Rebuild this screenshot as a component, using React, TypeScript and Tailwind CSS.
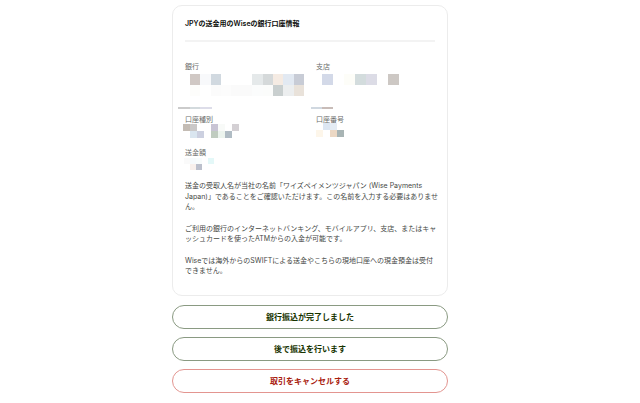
import React from "react";

type Cell = string | null;

function Pix({ rows, size, offset }: { rows: Cell[][]; size: number; offset: number }) {
  return (
    <div className="flex flex-col" style={{ marginLeft: offset }}>
      {rows.map((r, i) => (
        <div key={i} className="flex">
          {r.map((c, j) => (
            <div key={j} style={{ width: size, height: size, background: c ?? "transparent" }} />
          ))}
        </div>
      ))}
    </div>
  );
}

function Bar({ colors, offset }: { colors: [string, number][]; offset: number }) {
  return (
    <div className="flex h-[2px]" style={{ marginLeft: offset }}>
      {colors.map(([c, w], i) => (
        <div key={i} style={{ width: w, background: c }} />
      ))}
    </div>
  );
}

export default function App() {
  return (
    <div
      className="w-[640px] h-[403px] bg-white pl-[172px] pt-[5px]"
      style={{ fontFamily: 'Inter, "Noto Sans CJK JP", sans-serif' }}
    >
      <div className="w-[276px]">
        <div className="border border-[#ececec] rounded-[10px] px-[12px] pt-[13px] pb-[19px] h-[291px]">
          <div className="text-[7px] leading-[10px] font-semibold text-[#0e0f0c] whitespace-nowrap">
            JPYの送金用のWiseの銀行口座情報
          </div>
          <div className="mt-[11px] h-[2px] bg-[#f3f3f3]" />

          <div className="grid grid-cols-[119px_119px] gap-x-[12px] mt-[20px]">
            <div>
              <div className="text-[7px] leading-[10px] text-[#6a6c6a]">銀行</div>
              <div className="mt-[2px]">
                <Pix
                  size={11}
                  offset={5}
                  rows={[
                    ["#d0c8c4", "#f8f9fb", "#d1d9e0", null, null, null, "#e5e9ea", "#d5d9da", "#f5ebe3", "#e2e9f2", "#c8ccd6"],
                    ["#fdfdfb", null, "#fbfbfb", "#fcfcfc", "#fafafa", "#fafafa", "#fbfcfc", "#fbfcfb", "#c9cfcf", "#eceeef", "#e9e2da"],
                  ]}
                />
              </div>
              <div className="mt-[11px]">
                <Bar offset={-7} colors={[["#cbcbcb", 12], ["#d3dadd", 10], ["#dddde9", 12]]} />
              </div>
            </div>
            <div>
              <div className="text-[7px] leading-[10px] text-[#6a6c6a]">支店</div>
              <div className="mt-[2px]">
                <Pix
                  size={11}
                  offset={6}
                  rows={[
                    ["#d3d9e8", null, "#fdfdf8", "#d3dcdd", "#dcdce6", null, "#cdc8c4"],
                    [null, null, null, null, null, null, null],
                  ]}
                />
              </div>
              <div className="mt-[11px]">
                <Bar offset={-5} colors={[["#d0d8e0", 11], ["#c8bcb8", 11]]} />
              </div>
            </div>

            <div className="mt-[6px]">
              <div className="text-[7px] leading-[10px] text-[#6a6c6a]">口座種別</div>
              <div className="-mt-[1px]">
                <Pix
                  size={7}
                  offset={-2}
                  rows={[
                    ["#c4bcb4", "#cac8c8", null, null, "#c8c4d4", "#f8faf8", null, "#d4d0d4"],
                    [null, "#dae6f0", "#ccd0e0", null, "#c0ccc0", "#ecf4ee", "#b0bcc4", null],
                  ]}
                />
              </div>
            </div>
            <div className="mt-[6px]">
              <div className="text-[7px] leading-[10px] text-[#6a6c6a]">口座番号</div>
              <div className="-mt-[2px]">
                <Pix
                  size={7}
                  offset={0}
                  rows={[
                    [null, "#dce6f2", "#e4ecf4", null],
                    ["#fdf6ea", null, "#ecd8c4", "#a8b4b4"],
                  ]}
                />
              </div>
            </div>

            <div className="mt-[10px] col-span-2">
              <div className="text-[7px] leading-[10px] text-[#6a6c6a]">送金額</div>
              <Pix
                size={6}
                offset={-1}
                rows={[
                  ["#fafafa", "#f6fafc", "#f8fcfc", null, "#e4f8f8"],
                  [null, "#f8f0ec", "#bcc0cc", null, null],
                ]}
              />
            </div>
          </div>

          <div className="mt-[11px] text-[7px] leading-[10.5px] text-[#454745] whitespace-nowrap">
            <p>
              送金の受取人名が当社の名前「ワイズペイメンツジャパン (Wise Payments
              <br />
              Japan)」であることをご確認いただけます。この名前を入力する必要はありませ
              <br />
              ん。
            </p>
            <p className="mt-[11px]">
              ご利用の銀行のインターネットバンキング、モバイルアプリ、支店、またはキャ
              <br />
              ッシュカードを使ったATMからの入金が可能です。
            </p>
            <p className="mt-[11px]">
              Wiseでは海外からのSWIFTによる送金やこちらの現地口座への現金預金は受付
              <br />
              できません。
            </p>
          </div>
        </div>

        <div className="mt-[9px] flex flex-col gap-[8px]">
          <button className="h-[24px] w-full rounded-full border border-[#8a9a82] text-[8px] font-bold text-[#163300]">
            銀行振込が完了しました
          </button>
          <button className="h-[24px] w-full rounded-full border border-[#8a9a82] text-[8px] font-bold text-[#163300]">
            後で振込を行います
          </button>
          <button className="h-[24px] w-full rounded-full border border-[#e39590] text-[8px] font-bold text-[#a8200d]">
            取引をキャンセルする
          </button>
        </div>
      </div>
    </div>
  );
}
